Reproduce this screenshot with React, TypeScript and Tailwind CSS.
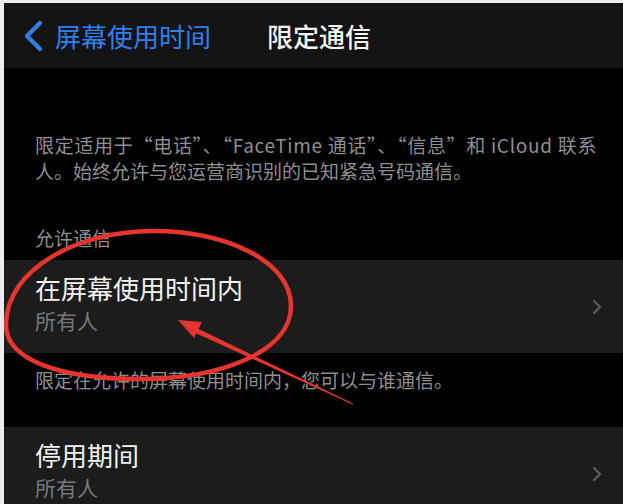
import { ChevronRight } from 'lucide-react';

const cjk = { fontFamily: '"Noto Sans CJK SC", "Noto Sans", sans-serif' };

function Row({ title, value }: { title: string; value: string }) {
  return (
    <div className="flex items-center bg-[#1c1c1d] pl-[31px] pr-[14px]">
      <div className="flex flex-1 flex-col gap-[2px] pt-[12px] pb-[19px]">
        <span className="text-[26px] leading-[32px] text-[#f2f2f2]">{title}</span>
        <span className="text-[21px] leading-[28px] text-[#78787c]">{value}</span>
      </div>
      <ChevronRight className="h-[24px] w-[24px] text-[#5c5c5f]" strokeWidth={2.4} />
    </div>
  );
}

export default function App() {
  return (
    <div
      className="relative h-[504px] w-[623px] overflow-hidden border-t-[3px] border-l-[4px] border-[#ececec] bg-black"
      style={cjk}
    >
      {/* nav bar */}
      <div className="flex h-[65px] items-center bg-[#141414]">
        <div className="flex items-center pl-[16px]">
          <svg width="26" height="32" viewBox="0 0 26 32" fill="none">
            <path d="M20 3 L7 16 L20 29" stroke="#2f80ec" strokeWidth="4.2" strokeLinecap="round" strokeLinejoin="round" />
          </svg>
          <span className="ml-[9px] text-[26px] leading-none text-[#2f80ec]">屏幕使用时间</span>
        </div>
        <span className="ml-[56px] text-[26px] font-medium leading-none text-[#f4f4f4]">限定通信</span>
      </div>

      <div className="flex flex-col">
        <p className="pl-[31px] pr-[20px] pt-[64px] text-[19px] leading-[26px] text-[#8e8e93]">
          <span className="tracking-[0.7px]">限定适用于“电话”、“FaceTime 通话”、“信息”和 iCloud 联系</span>
          <br />
          人。始终允许与您运营商识别的已知紧急号码通信。
        </p>
        <p className="mt-[41px] mb-[9px] pl-[31px] text-[19px] leading-[26px] text-[#8e8e93]">允许通信</p>
        <Row title="在屏幕使用时间内" value="所有人" />
        <p className="mt-[14px] mb-[34px] pl-[31px] text-[19px] leading-[26px] text-[#8e8e93]">
          限定在允许的屏幕使用时间内，您可以与谁通信。
        </p>
        <Row title="停用期间" value="所有人" />
      </div>

      {/* red annotation */}
      <svg className="pointer-events-none absolute left-[-4px] top-[-3px]" width="623" height="504" viewBox="0 0 623 504">
        <path
          d="M 6 325 C 6 268, 80 231, 152 231 C 228 231, 291 262, 291 306 C 291 352, 220 379, 140 379 C 60 379, 6 360, 6 325 Z"
          fill="none"
          stroke="#e6352e"
          strokeWidth="4.5"
        />
        <polygon points="178,320 202,322 194,338" fill="#e6352e" />
        <polygon points="196.1,327.8 353.2,403.6 352.8,404.4 193.9,332.2" fill="#e6352e" />
      </svg>
    </div>
  );
}
